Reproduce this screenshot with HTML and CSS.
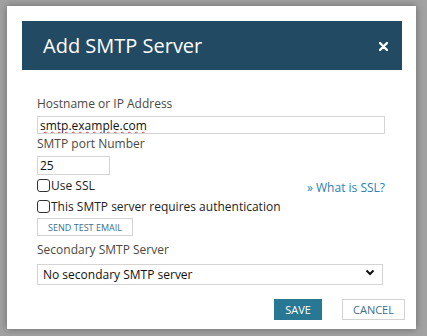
FILE: index.html
```html
<!DOCTYPE html>
<html lang="en">
<head>
    <meta charset="UTF-8">
    <title>Add SMTP Server</title>
    <link rel="stylesheet" href="styles.css">
</head>
<body>
    <div class="dialog">
        <!-- Header -->
        <div class="dialog-header">
            <h1 class="dialog-title">Add SMTP Server</h1>
            <button class="close-btn" aria-label="Close">
                <svg width="9" height="9" viewBox="0 0 9 9">
                    <path d="M1 1L8 8M8 1L1 8" stroke="#fff" stroke-width="2.4" stroke-linecap="round"/>
                </svg>
            </button>
        </div>

        <!-- Form -->
        <div class="dialog-body">
            <label class="field-label" for="host">Hostname or IP Address</label>
            <input id="host" class="text-input wide" type="text" value="smtp.example.com">

            <label class="field-label" for="port">SMTP port Number</label>
            <input id="port" class="text-input port" type="text" value="25">

            <div class="check-row">
                <label class="check"><input type="checkbox">Use SSL</label>
                <a class="help-link" href="#">» What is SSL?</a>
            </div>
            <div class="check-row">
                <label class="check"><input type="checkbox">This SMTP server requires authentication</label>
            </div>

            <button class="btn-small">SEND TEST EMAIL</button>

            <label class="field-label" for="secondary">Secondary SMTP Server</label>
            <div class="select-wrap">
                <select id="secondary" class="select">
                    <option>No secondary SMTP server</option>
                </select>
                <svg class="select-arrow" width="10" height="7" viewBox="0 0 10 7">
                    <path d="M1.5 1.5L5 5L8.5 1.5" fill="none" stroke="#111" stroke-width="2"/>
                </svg>
            </div>
        </div>

        <!-- Footer -->
        <div class="dialog-footer">
            <button class="btn btn-primary">SAVE</button>
            <button class="btn btn-default">CANCEL</button>
        </div>
    </div>
</body>
</html>
```

FILE: styles.css
```css
* {
    box-sizing: border-box;
}

body {
    margin: 0;
    width: 427px;
    height: 336px;
    background: #a2a2a2;
    font-family: "Open Sans", "DejaVu Sans", sans-serif;
    overflow: hidden;
}

/* Dialog shell */
.dialog {
    width: 409px;
    height: 323px;
    margin: 6px 0 0 7px;
    background: #fff;
    box-shadow: 0 0 8px rgba(0, 0, 0, 0.35);
    display: flex;
    flex-direction: column;
}

.dialog-header {
    margin: 15px 14px 0 15px;
    height: 49px;
    background: #234a63;
    display: flex;
    align-items: center;
    justify-content: space-between;
    padding: 0 14px 0 21px;
}

.dialog-title {
    margin: 0;
    color: #fff;
    font-size: 20px;
    font-weight: 400;
}

.close-btn {
    border: 0;
    padding: 0;
    background: none;
    display: flex;
    margin-top: 2px;
}

/* Form body */
.dialog-body {
    padding: 26px 31px 0 30px;
    display: flex;
    flex-direction: column;
    align-items: flex-start;
}

.field-label {
    font-size: 12px;
    line-height: 16px;
    color: #4b4843;
    margin-bottom: 4px;
}

.text-input {
    font-family: inherit;
    font-size: 12px;
    color: #111;
    border: 1px solid #d4d4d4;
    padding: 0 2px;
    margin: 0 0 2px;
    outline: none;
    text-decoration: underline wavy #e0383b;
    text-decoration-thickness: 1px;
}

.text-input.wide {
    width: 348px;
    height: 18px;
}

.text-input.port {
    width: 73px;
    height: 19px;
    margin-bottom: 0;
    text-decoration: none;
}

.check-row {
    width: 348px;
    height: 21px;
    display: flex;
    align-items: center;
    justify-content: space-between;
}

.check {
    display: flex;
    align-items: center;
    font-size: 12px;
    color: #222;
}

.check input {
    appearance: none;
    -webkit-appearance: none;
    width: 13px;
    height: 13px;
    margin: 0 1px 0 0;
    border: 1px solid #333;
    border-radius: 3px;
    background: #fff;
}

.help-link {
    font-size: 12px;
    color: #2d7fb6;
    text-decoration: none;
    padding-top: 4px;
}

.btn-small {
    margin: 1px 0 6px;
    width: 96px;
    height: 18px;
    padding: 0;
    border: 1px solid #d2d2d2;
    background: #fff;
    font-family: inherit;
    font-size: 9px;
    color: #3d6f90;
}

.select-wrap {
    position: relative;
}

.select {
    appearance: none;
    -webkit-appearance: none;
    width: 346px;
    height: 21px;
    border: 1px solid #d4d4d4;
    border-radius: 0;
    background: #fff;
    padding: 0 5px;
    font-family: inherit;
    font-size: 12px;
    color: #111;
    outline: none;
}

.select-arrow {
    position: absolute;
    right: 8px;
    top: 7px;
}

/* Footer buttons */
.dialog-footer {
    display: flex;
    justify-content: flex-end;
    gap: 20px;
    padding: 14px 11px 0 0;
}

.btn {
    height: 21px;
    padding: 0;
    font-family: inherit;
    font-size: 11px;
}

.btn-primary {
    width: 48px;
    border: 0;
    background: #287893;
    color: #fff;
}

.btn-default {
    width: 63px;
    border: 1px solid #d2d2d2;
    background: #fff;
    color: #3d6f90;
}
```
